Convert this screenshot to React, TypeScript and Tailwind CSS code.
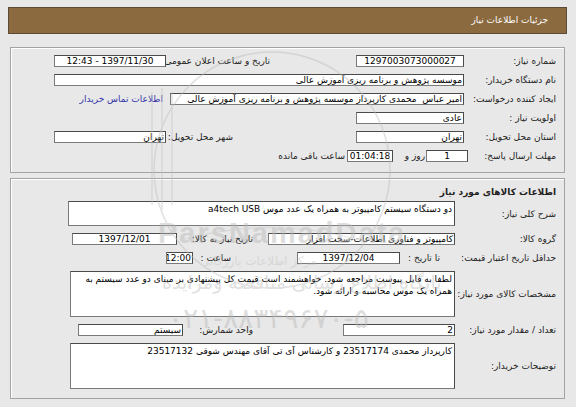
import React from "react";

const font = { fontFamily: '"DejaVu Sans", sans-serif' };

const Box = ({
  w,
  children,
  align = "right",
  className = "",
}: {
  w: string;
  children?: React.ReactNode;
  align?: "right" | "center";
  className?: string;
}) => (
  <div
    className={`${w} h-[12px] shrink-0 bg-white border border-[#7a7a7a] border-t-[#4a4a4a] border-r-[#4a4a4a] overflow-hidden whitespace-nowrap leading-[10px] text-[9px] text-black px-[1px] ${
      align === "center" ? "text-center" : "text-right"
    } ${className}`}
  >
    {children}
  </div>
);

const Label = ({ w, children }: { w: string; children: React.ReactNode }) => (
  <div className={`${w} shrink-0 text-right whitespace-nowrap text-[9px] leading-[12px] text-[#222]`}>
    {children}
  </div>
);

const Watermark = () => (
  <div className="pointer-events-none absolute inset-0 opacity-45">
    <svg className="absolute left-0 top-0" width="576" height="407">
      <circle cx="272" cy="170" r="118" fill="none" stroke="#bdbdbd" strokeWidth="1.5" />
      <path d="M152 92 L152 205 M162 88 L162 210 M172 92 L172 205" stroke="#c4c4c4" strokeWidth="1.5" fill="none" />
      <path d="M180 240 Q270 215 360 240" stroke="#c4c4c4" strokeWidth="1.2" fill="none" />
    </svg>
    <div
      className="absolute left-[158px] top-[212px] text-[29px] font-bold tracking-[2px] text-[#b8b8b8]"
      style={{ fontFamily: '"Liberation Sans", sans-serif' }}
    >
      ParsNamadData
    </div>
    <div dir="rtl" className="absolute left-[200px] top-[252px] text-[12px] text-[#c2c2c2]" style={font}>
      مرکز اطلاعات بازرگانی
    </div>
    <div dir="rtl" className="absolute left-[162px] top-[268px] text-[19px] text-[#bdbdbd]" style={font}>
      پایگاه اطلاع رسانی مناقصه ومزایده
    </div>
    <div dir="rtl" className="absolute left-[168px] top-[298px] text-[28px] text-[#b8b8b8]" style={font}>
      ۰۲۱-۸۸۳۴۹۶۷۰-۵
    </div>
  </div>
);

export default function App() {
  return (
    <div
      dir="rtl"
      className="relative w-[576px] h-[407px] overflow-hidden bg-[#e8e8e8] pt-[7px] pr-[9px] pl-[8px]"
      style={font}
    >
      {/* header */}
      <div className="h-[27px] bg-[#8b6a3f] border border-[#5a4a36] flex items-center pr-[18px]">
        <span className="text-white text-[9px]">جزئیات اطلاعات نیاز</span>
      </div>

      {/* panel 1 */}
      <div className="mt-[13px] mx-[2px] h-[126px] border border-[#a3a3a3] shadow-[inset_1px_1px_0_#ffffff] pt-[7px] pr-[8px] flex flex-col gap-[7px]">
        <div className="flex items-center h-[12px]">
          <Label w="w-[86px]">شماره نیاز:</Label>
          <Box w="w-[108px] mr-[6px]" align="center">1297003073000027</Box>
          <Label w="w-[100px] mr-[86px]">تاریخ و ساعت اعلان عمومی:</Label>
          <Box w="w-[112px] mr-[4px]" align="center">1397/11/30 - 12:43</Box>
        </div>
        <div className="flex items-center h-[12px]">
          <Label w="w-[86px]">نام دستگاه خریدار:</Label>
          <Box w="w-[410px] mr-[6px]">موسسه پژوهش و برنامه ریزی آموزش عالی</Box>
        </div>
        <div className="flex items-center h-[12px]">
          <Label w="w-[86px]">ایجاد کننده درخواست:</Label>
          <Box w="w-[294px] mr-[6px]">امیر عباس&nbsp; محمدی کارپرداز موسسه پژوهش و برنامه ریزی آموزش عالی</Box>
          <a className="mr-[7px] text-[9px] leading-[12px] text-[#3535a8] whitespace-nowrap">اطلاعات تماس خریدار</a>
        </div>
        <div className="flex items-center h-[12px]">
          <Label w="w-[86px]">اولویت نیاز :</Label>
          <Box w="w-[108px] mr-[6px]">عادی</Box>
        </div>
        <div className="flex items-center h-[12px]">
          <Label w="w-[86px]">استان محل تحویل:</Label>
          <Box w="w-[108px] mr-[6px]">تهران</Box>
          <Label w="w-[63px] mr-[123px]">شهر محل تحویل:</Label>
          <Box w="w-[112px] mr-[4px]">تهران</Box>
        </div>
        <div className="flex items-center h-[12px]">
          <Label w="w-[86px]">مهلت ارسال پاسخ:</Label>
          <Box w="w-[42px] mr-[2px]" align="center">1</Box>
          <Label w="w-[32px] mr-[1px]">روز و</Label>
          <Box w="w-[46px]" align="center">01:04:18</Box>
          <Label w="w-[70px] mr-[2px]">ساعت باقی مانده</Label>
        </div>
      </div>

      {/* panel 2 */}
      <div className="mt-[5px] mx-[2px] h-[221px] border border-[#a3a3a3] shadow-[inset_1px_1px_0_#ffffff] pt-[6px] pr-[8px] flex flex-col">
        <div className="h-[14px] mb-[2px] text-[9px] font-bold leading-[14px] text-[#222]">
          اطلاعات کالاهای مورد نیاز
        </div>
        <div className="flex flex-col gap-[7px]">
          <div className="flex items-center">
            <Label w="w-[94px]">شرح کلی نیاز:</Label>
            <div className="w-[387px] h-[25px] mr-[7px] bg-white border border-[#7a7a7a] border-t-[#4a4a4a] border-r-[#4a4a4a] px-[2px] pt-[1px] text-[9px] leading-[12px] text-black">
              دو دستگاه سیستم کامپیوتر به همراه یک عدد موس a4tech USB
            </div>
          </div>
          <div className="flex items-center h-[12px]">
            <Label w="w-[94px]">گروه کالا:</Label>
            <Box w="w-[187px] mr-[7px]">کامپیوتر و فناوری اطلاعات-سخت افزار</Box>
            <Label w="w-[68px] mr-[15px]">تاریخ نیاز به کالا:</Label>
            <Box w="w-[105px] mr-[8px]" align="center">1397/12/01</Box>
          </div>
          <div className="flex items-center h-[12px]">
            <Label w="w-[114px]">حداقل تاریخ اعتبار قیمت:</Label>
            <Label w="w-[36px] mr-[2px]">تا تاریخ :</Label>
            <Box w="w-[103px] mr-[4px]" align="center">1397/12/04</Box>
            <Label w="w-[32px] mr-[66px]">ساعت :</Label>
            <Box w="w-[27px] mr-[6px]" align="center">12:00</Box>
          </div>
          <div className="flex items-center">
            <Label w="w-[94px]">مشخصات کالای مورد نیاز:</Label>
            <div className="w-[385px] h-[46px] mr-[7px] bg-white border border-[#7a7a7a] border-t-[#4a4a4a] border-r-[#4a4a4a] px-[2px] pt-[1px] text-[9px] leading-[12px] text-black">
              لطفا به فایل پیوست مراجعه شود. خواهشمند است قیمت کل پیشنهادی بر مبنای دو عدد سیستم به همراه یک موس محاسبه و ارائه شود.
            </div>
          </div>
          <div className="flex items-center h-[12px]">
            <Label w="w-[94px]">تعداد / مقدار مورد نیاز:</Label>
            <Box w="w-[112px] mr-[7px]">2</Box>
            <Label w="w-[67px] mr-[90px]">واحد شمارش:</Label>
            <Box w="w-[105px] mr-[3px]">سیستم</Box>
          </div>
          <div className="flex items-center">
            <Label w="w-[94px]">توضیحات خریدار:</Label>
            <div className="w-[385px] h-[46px] mr-[7px] bg-white border border-[#7a7a7a] border-t-[#4a4a4a] border-r-[#4a4a4a] px-[2px] pt-[1px] text-[9px] leading-[12px] text-black">
              کارپرداز محمدی 23517174 و کارشناس آی تی آقای مهندس شوقی 23517132
            </div>
          </div>
        </div>
      </div>

      <Watermark />
    </div>
  );
}
